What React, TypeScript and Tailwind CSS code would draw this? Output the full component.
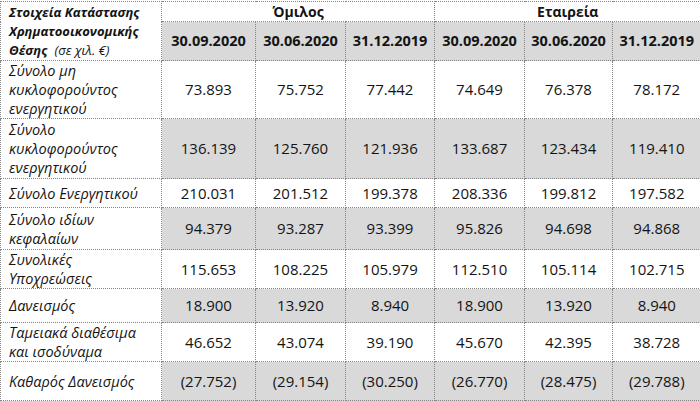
const rows = [
  {
    label: ["Σύνολο μη", "κυκλοφορούντος", "ενεργητικού"],
    vals: ["73.893", "75.752", "77.442", "74.649", "76.378", "78.172"],
    gray: false,
    h: "h-[57px]",
  },
  {
    label: ["Σύνολο", "κυκλοφορούντος", "ενεργητικού"],
    vals: ["136.139", "125.760", "121.936", "133.687", "123.434", "119.410"],
    gray: true,
    h: "h-[60px]",
  },
  {
    label: ["Σύνολο Ενεργητικού"],
    vals: ["210.031", "201.512", "199.378", "208.336", "199.812", "197.582"],
    gray: false,
    h: "h-[29px]",
  },
  {
    label: ["Σύνολο ιδίων", "κεφαλαίων"],
    vals: ["94.379", "93.287", "93.399", "95.826", "94.698", "94.868"],
    gray: true,
    h: "h-[42px]",
  },
  {
    label: ["Συνολικές", "Υποχρεώσεις"],
    vals: ["115.653", "108.225", "105.979", "112.510", "105.114", "102.715"],
    gray: false,
    h: "h-[39px]",
  },
  {
    label: ["Δανεισμός"],
    vals: ["18.900", "13.920", "8.940", "18.900", "13.920", "8.940"],
    gray: true,
    h: "h-[34px]",
  },
  {
    label: ["Ταμειακά διαθέσιμα", "και ισοδύναμα"],
    vals: ["46.652", "43.074", "39.190", "45.670", "42.395", "38.728"],
    gray: false,
    h: "h-[39px]",
  },
  {
    label: ["Καθαρός Δανεισμός"],
    vals: ["(27.752)", "(29.154)", "(30.250)", "(26.770)", "(28.475)", "(29.788)"],
    gray: true,
    h: "h-[39px]",
  },
];

const dates = ["30.09.2020", "30.06.2020", "31.12.2019", "30.09.2020", "30.06.2020", "31.12.2019"];

const cell = "border border-dotted border-[#858585] p-0";

export default function App() {
  return (
    <div className="w-[700px] h-[401px] bg-white pt-px overflow-hidden font-['Open_Sans',sans-serif] text-[#141414]">
      <table className="w-[700px] table-fixed border-collapse">
        <colgroup>
          <col className="w-[161px]" />
          <col className="w-[94px]" />
          <col className="w-[90px]" />
          <col className="w-[89px]" />
          <col className="w-[90px]" />
          <col className="w-[88px]" />
          <col className="w-[88px]" />
        </colgroup>
        <thead>
          <tr className="h-[20px]">
            <th rowSpan={2} className={`${cell} text-left align-middle pl-2 font-bold italic text-[13px] leading-[19px]`}>
              <div>Στοιχεία Κατάστασης</div>
              <div>Χρηματοοικονομικής</div>
              <div>
                Θέσης <span className="font-normal text-[13px] ml-1">(σε χιλ. €)</span>
              </div>
            </th>
            <th colSpan={3} className={`${cell} text-center font-bold text-[14px] leading-[19px]`}>
              Όμιλος
            </th>
            <th
              colSpan={3}
              className={`${cell} border-r-0 border-l-solid border-l-[#3a3a3a] text-center font-bold text-[14px] leading-[19px]`}
            >
              Εταιρεία
            </th>
          </tr>
          <tr className="h-[39px]">
            {dates.map((d, i) => (
              <th
                key={i}
                className={`${cell} bg-[#d9d9d9] text-center font-bold text-[14.5px] ${
                  i === 3 ? "border-l-solid border-l-[#3a3a3a]" : ""
                } ${i === 5 ? "border-r-0" : ""}`}
              >
                {d}
              </th>
            ))}
          </tr>
        </thead>
        <tbody>
          {rows.map((r, ri) => (
            <tr key={ri} className={r.h}>
              <td className={`${cell} pl-2 italic text-[14.5px] leading-[19px] align-middle`}>
                {r.label.map((l, li) => (
                  <div key={li}>{l}</div>
                ))}
              </td>
              {r.vals.map((v, i) => (
                <td
                  key={i}
                  className={`${cell} text-center text-[15px] align-middle ${r.gray ? "bg-[#d9d9d9]" : ""} ${
                    i === 3 ? "border-l-solid border-l-[#3a3a3a]" : ""
                  } ${i === 5 ? "border-r-0" : ""}`}
                >
                  {v}
                </td>
              ))}
            </tr>
          ))}
        </tbody>
      </table>
    </div>
  );
}
